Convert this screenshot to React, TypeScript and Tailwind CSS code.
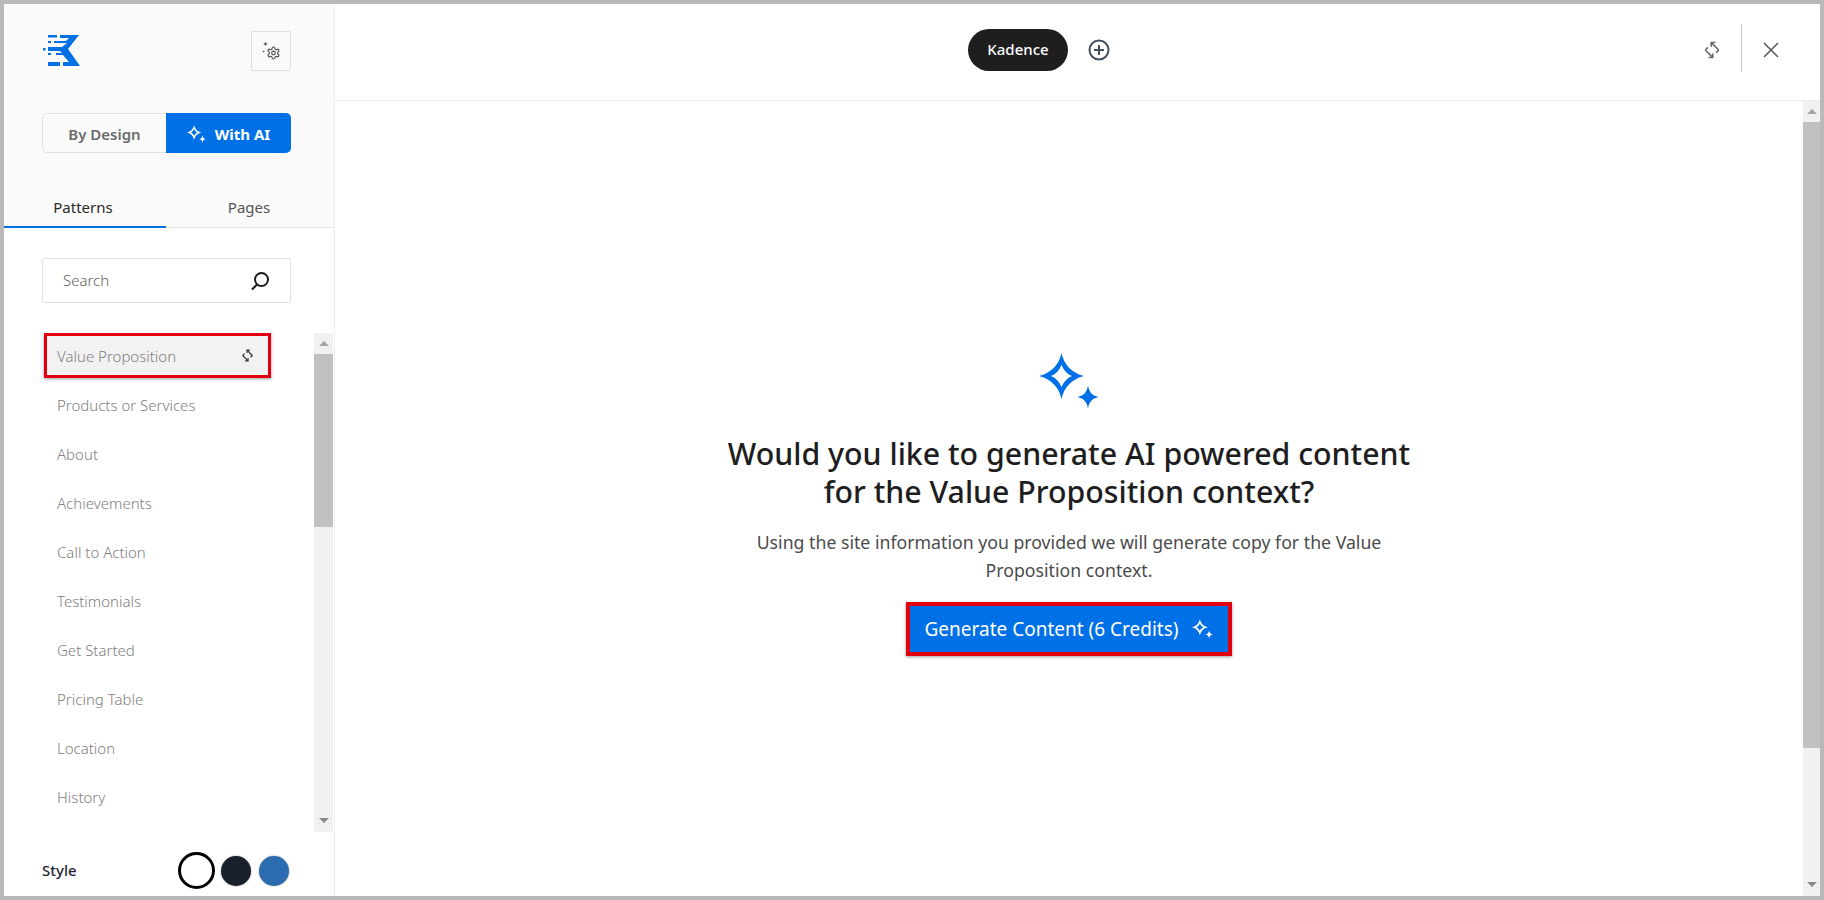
import { type FunctionComponent } from "react";

type IconProps = {
    className?: string;
};

const categories = [
    "Products or Services",
    "About",
    "Achievements",
    "Call to Action",
    "Testimonials",
    "Get Started",
    "Pricing Table",
    "Location",
    "History",
];

const KadenceLogo: FunctionComponent<IconProps> = ({ className }) => (
    <svg className={className} viewBox="0 0 38 31" fill="#0070e6">
        <path d="M17 0H36L25 14 37 31H20V27H26L20 20H13V18H19L17 16H5V12H19L24 8H11V6H23L26 3H17Z" />
        <rect x="5" y="0" width="9" height="2.5" />
        <rect x="5" y="6" width="3" height="2" />
        <rect x="0" y="13" width="2.5" height="2.5" />
        <rect x="5" y="18" width="3" height="2" />
        <rect x="5" y="27" width="12" height="4" />
    </svg>
);

const Sparkles: FunctionComponent<IconProps> = ({ className }) => (
    <svg className={className} viewBox="0 0 60 56" fill="currentColor">
        <path
            fillRule="evenodd"
            d="M22.5 0C25 12 33 20 45 23C33 26 25 34 22.5 46C20 34 12 26 0 23C12 20 20 12 22.5 0ZM22.5 12C24.5 17 28 21 33 23C28 25 24.5 29 22.5 34C20.5 29 17 25 12 23C17 21 20.5 17 22.5 12Z"
        />
        <path d="M49 32.5C50 39 53 42.5 59.500 44C53 45.5 50 49 49 55.5C48 49 45 45.5 38.5 44C45 42.5 48 39 49 32.5Z" />
    </svg>
);

const SyncIcon: FunctionComponent<IconProps> = ({ className }) => (
    <svg className={className} viewBox="0 0 24 24" fill="none" stroke="currentColor" strokeWidth="2.2">
        <path d="M11.500 2.500 20 11Q21 12 20 13L17.500 15.500" />
        <path d="M11 7.500V2H16.500" />
        <path d="M12.500 21.500 4 13Q3 12 4 11L6.500 8.500" />
        <path d="M13 16.500V22H7.500" />
    </svg>
);

const GearSparkIcon: FunctionComponent<IconProps> = ({ className }) => (
    <svg className={className} viewBox="0 0 20 20" fill="none" stroke="currentColor">
        <g transform="translate(5.3 4.8) scale(0.6)" strokeWidth="2">
            <path d="M12.22 2h-.44a2 2 0 0 0-2 2v.18a2 2 0 0 1-1 1.73l-.43.25a2 2 0 0 1-2 0l-.15-.08a2 2 0 0 0-2.73.73l-.22.38a2 2 0 0 0 .73 2.73l.15.1a2 2 0 0 1 1 1.72v.51a2 2 0 0 1-1 1.74l-.15.09a2 2 0 0 0-.73 2.73l.22.38a2 2 0 0 0 2.73.73l.15-.08a2 2 0 0 1 2 0l.43.25a2 2 0 0 1 1 1.73V20a2 2 0 0 0 2 2h.44a2 2 0 0 0 2-2v-.18a2 2 0 0 1 1-1.73l.43-.25a2 2 0 0 1 2 0l.15.08a2 2 0 0 0 2.73-.73l.22-.39a2 2 0 0 0-.73-2.73l-.15-.08a2 2 0 0 1-1-1.74v-.5a2 2 0 0 1 1-1.74l.15-.09a2 2 0 0 0 .73-2.73l-.22-.38a2 2 0 0 0-2.73-.73l-.15.08a2 2 0 0 1-2 0l-.43-.25a2 2 0 0 1-1-1.73V4a2 2 0 0 0-2-2z" />
            <circle cx="12" cy="12" r="3" />
        </g>
        <path d="M4.500 0.500c.3 1.500.9 2.100 2.400 2.400-1.500.3-2.100.9-2.400 2.400-.3-1.500-.9-2.100-2.400-2.400 1.500-.3 2.100-.9 2.400-2.400z" fill="currentColor" stroke="none" />
        <path d="M2.500 9.200c.2.800.5 1.100 1.300 1.300-.8.2-1.100.5-1.300 1.300-.2-.8-.5-1.100-1.300-1.300.8-.2 1.100-.5 1.300-1.300z" fill="currentColor" stroke="none" />
    </svg>
);

const ListItem: FunctionComponent<{ label: string }> = ({ label }) => (
    <div className="h-[49px] flex items-center pl-[53px] text-[15px] font-light text-[#808080]">
        {label}
    </div>
);

const ScrollArrow: FunctionComponent<{ down?: boolean }> = ({ down }) => (
    <div className={down ? "h-[14px] flex items-start justify-center shrink-0" : "h-[21px] flex items-center justify-center shrink-0"}>
        <div
            className={
                down
                    ? "w-0 h-0 border-x-[5px] border-x-transparent border-t-[5px] border-t-[#8a8a8a]"
                    : "w-0 h-0 border-x-[5px] border-x-transparent border-b-[5px] border-b-[#a3a3a3]"
            }
        />
    </div>
);

const App: FunctionComponent = () => {
    return (
        <div
            className="w-[1824px] h-[900px] border-4 border-[#b9b9b9] bg-white flex overflow-hidden"
            style={{ fontFamily: '"Noto Sans", sans-serif' }}
        >
            <aside className="w-[331px] shrink-0 bg-white border-r border-[#ededed] flex flex-col">
                <div className="h-[109px] shrink-0 bg-[#fafafa] flex items-start justify-between pl-[39px] pr-[43px] pt-[27px]">
                    <KadenceLogo className="w-[38px] h-[31px] mt-[4px]" />
                    <div className="w-[40px] h-[40px] border border-[#dedede] rounded-[2px] flex items-center justify-center text-[#555]">
                        <GearSparkIcon className="w-[20px] h-[20px]" />
                    </div>
                </div>

                <div className="bg-[#fafafa] shrink-0 px-[38px]">
                    <div className="flex h-[40px] w-[249px] text-[15px] font-semibold">
                        <div className="w-[124px] pt-[2px] border border-r-0 border-[#e2e2e2] rounded-l-[5px] flex items-center justify-center text-[#6b6b6b]">
                            By Design
                        </div>
                        <div className="w-[125px] pt-[2px] bg-[#0070e6] rounded-r-[5px] flex items-center justify-center gap-[9px] text-white font-bold">
                            <Sparkles className="w-[19px] h-[18px]" />
                            With AI
                        </div>
                    </div>
                </div>

                <div className="bg-[#fafafa] shrink-0 flex h-[75px] border-b border-[#e4e4e4] text-[15px]">
                    <div className="w-[162px] flex items-end justify-center pb-[8px] pr-[4px] border-b-2 border-[#0070e6] -mb-px text-[#2a2a2a]">
                        Patterns
                    </div>
                    <div className="flex-1 flex items-end justify-center pb-[9px] pr-[2px] text-[#555]">Pages</div>
                </div>

                <div className="pl-[38px] pr-[43px] pt-[30px] shrink-0">
                    <div className="h-[45px] border border-[#e2e2e2] rounded-[2px] flex items-center justify-between pl-[20px] pr-[19px] text-[15px] font-light text-[#5f5f5f]">
                        Search
                        <svg className="w-[22px] h-[22px] text-[#1c1c1c]" viewBox="0 0 22 22" fill="none" stroke="currentColor" strokeWidth="2">
                            <circle cx="12.500" cy="9.500" r="6.500" />
                            <path d="M8 14.500 3 19.500" />
                        </svg>
                    </div>
                </div>

                <div className="mt-[30px] h-[499px] shrink-0 flex">
                    <div className="flex-1 min-w-0 overflow-hidden">
                        <div className="relative h-[45px] ml-[40px] mr-[43px] mb-[3px] bg-[#f2f2f2] border-[3px] border-[#e2000f] shadow-[0_1px_3px_rgba(0,0,0,0.4)] flex items-center justify-between pl-[10px] pr-[14px] pt-[2px] text-[15px] font-light text-[#808080]">
                            Value Proposition
                            <SyncIcon className="w-[13px] h-[13px] text-[#333] mb-[2px]" />
                        </div>
                        {categories.map((label) => (
                            <ListItem key={label} label={label} />
                        ))}
                    </div>
                    <div className="w-[19px] mr-px shrink-0 bg-[#f1f1f1] flex flex-col">
                        <ScrollArrow />
                        <div className="h-[173px] bg-[#c1c1c1] shrink-0" />
                        <div className="flex-1" />
                        <ScrollArrow down />
                    </div>
                </div>

                <div className="flex-1 flex items-center justify-between pl-[38px] pr-[45px] pt-[13px]">
                    <span className="text-[15px] font-medium text-[#1f2430]">Style</span>
                    <div className="flex items-center gap-[6px]">
                        <div className="w-[37px] h-[37px] rounded-full bg-white border-[3px] border-black" />
                        <div className="w-[30px] h-[30px] rounded-full bg-[#1a202c] shadow-[0_0_2px_rgba(0,0,0,0.4)]" />
                        <div className="w-[30px] h-[30px] rounded-full bg-[#2b6cb0] ml-[2px] shadow-[0_0_2px_rgba(0,0,0,0.4)]" />
                    </div>
                </div>
            </aside>

            <main className="flex-1 min-w-0 flex flex-col">
                <header className="relative h-[97px] shrink-0 border-b border-[#ededed] flex items-center justify-center">
                    <div className="flex items-center mr-[77px] mt-[-5px]">
                        <div className="w-[100px] h-[42px] rounded-full bg-[#1e1e1e] text-white text-[15px] font-medium flex items-center justify-center">
                            Kadence
                        </div>
                        <svg className="w-[22px] h-[22px] ml-[20px] text-[#454e5c]" viewBox="0 0 22 22" fill="none" stroke="currentColor" strokeWidth="2">
                            <circle cx="11" cy="11" r="9.500" />
                            <path d="M11 6v10M6 11h10" />
                        </svg>
                    </div>
                    <div className="absolute right-[40px] top-[20px] flex items-center">
                        <SyncIcon className="w-[18px] h-[18px] text-[#6a6a6a] mr-[20px] mt-[4px]" />
                        <div className="w-px h-[48px] bg-[#c8c8c8] mr-[20px]" />
                        <svg className="w-[18px] h-[18px] text-[#555] mt-[4px]" viewBox="0 0 18 18" fill="none" stroke="currentColor" strokeWidth="1.500">
                            <path d="M2 2l14 14M16 2 2 16" />
                        </svg>
                    </div>
                </header>

                <div className="flex-1 min-h-0 flex">
                    <div className="flex-1 min-w-0 flex flex-col items-center pt-[252px]">
                        <Sparkles className="w-[60px] h-[56px] text-[#0070e6]" />
                        <h1 className="mt-[26px] text-[30.3px] leading-[38px] font-medium text-[#1e1e1e] text-center w-[760px]">
                            Would you like to generate AI powered content
                            <br />
                            for the Value Proposition context?
                        </h1>
                        <p className="mt-[17px] text-[17.7px] leading-[28px] text-[#4b4b4b] text-center w-[700px]">
                            Using the site information you provided we will generate copy for the Value
                            <br />
                            Proposition context.
                        </p>
                        <button className="mt-[18px] h-[54px] w-[326px] bg-[#0070e6] border-[4px] border-[#e2000f] shadow-[0_1px_3px_rgba(0,0,0,0.4)] text-white text-[19px] flex items-center justify-center gap-[14px]">
                            Generate Content (6 Credits)
                            <Sparkles className="w-[21px] h-[20px]" />
                        </button>
                    </div>
                    <div className="w-[17px] shrink-0 bg-[#f1f1f1] flex flex-col">
                        <ScrollArrow />
                        <div className="h-[626px] bg-[#c1c1c1] shrink-0" />
                        <div className="flex-1" />
                        <ScrollArrow down />
                    </div>
                </div>
            </main>
        </div>
    );
};

export default App;
